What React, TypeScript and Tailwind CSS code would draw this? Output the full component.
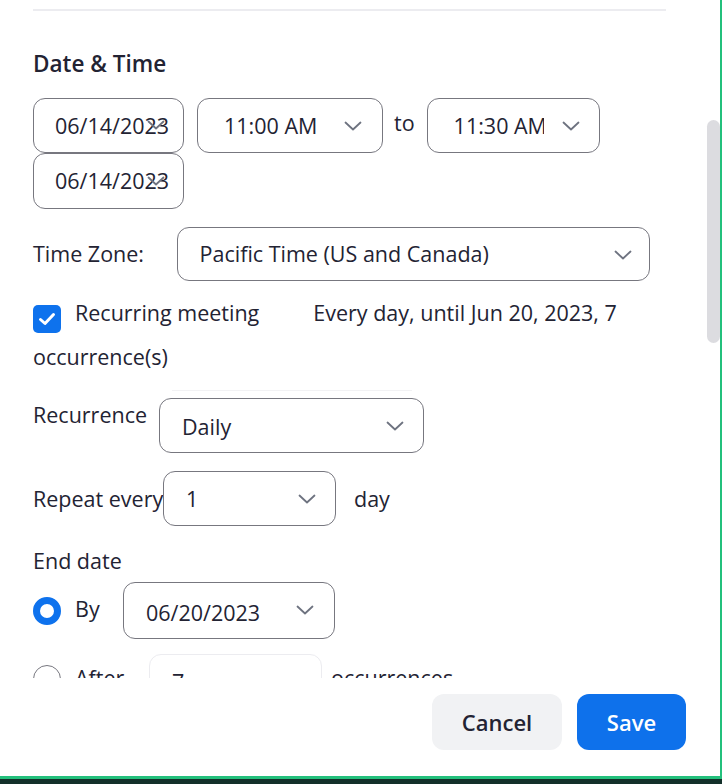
import { useState } from 'react'

function Chevron({ className = '' }: { className?: string }) {
  return (
    <svg width="18" height="10" viewBox="0 0 18 10" className={className} fill="none">
      <polyline points="1.5,1.5 9,8.5 16.5,1.5" stroke="#6e7380" strokeWidth="1.8" strokeLinecap="round" strokeLinejoin="round" />
    </svg>
  )
}

function SelectBox({
  value,
  className = '',
  textClass = '',
  chevronClass = '',
}: {
  value: string
  className?: string
  textClass?: string
  chevronClass?: string
}) {
  return (
    <div className={`relative flex items-center rounded-[12px] border border-[#77777f] bg-white overflow-hidden ${className}`}>
      <span className={`whitespace-nowrap ${textClass}`}>{value}</span>
      <Chevron className={`absolute ${chevronClass}`} />
    </div>
  )
}

export default function App() {
  const [recurring, setRecurring] = useState(true)

  return (
    <div
      className="relative h-[784px] w-[722px] overflow-hidden bg-white text-[#232333]"
      style={{ fontFamily: '"Open Sans", "Noto Sans", sans-serif' }}
    >
      <div className="h-[779px] w-[722px] border-r-2 border-b-[3px] border-[#23c07c] flex flex-col">
        {/* scroll area */}
        <div className="relative h-[678px] overflow-hidden">
          <div className="ml-[33px] mt-[9px] h-[2px] w-[633px] bg-[#ececf0]" />

          <div className="pl-[33px] pr-[70px]">
            <h2 className="mt-[39px] text-[22.5px] font-semibold leading-[28px]">Date &amp; Time</h2>

            <div className="mt-[20px] flex items-start text-[21.5px] leading-[28px]">
              <div className="flex flex-col">
                <SelectBox
                  value="06/14/2023"
                  className="h-[55px] w-[151px]"
                  textClass="pl-[21px]"
                  chevronClass="left-[113px] top-[21px]"
                />
                <SelectBox
                  value="06/14/2023"
                  className="h-[56px] w-[151px]"
                  textClass="pl-[21px]"
                  chevronClass="left-[113px] top-[22px]"
                />
              </div>
              <SelectBox
                value="11:00 AM"
                className="ml-[13px] h-[55px] w-[186px]"
                textClass="pl-[26px]"
                chevronClass="left-[146px] top-[22px]"
              />
              <span className="ml-[11px] mt-[11px]">to</span>
              <SelectBox
                value="11:30 AM"
                className="ml-[12px] h-[55px] w-[173px]"
                textClass="pl-[26px] w-[116px] shrink-0 overflow-hidden block"
                chevronClass="left-[134px] top-[22px]"
              />
            </div>

            <div className="mt-[18px] flex items-center text-[21.5px] leading-[28px]">
              <span className="w-[144px]">Time Zone:</span>
              <SelectBox
                value="Pacific Time (US and Canada)"
                className="h-[54px] w-[475px]"
                textClass="pl-[22px]"
                chevronClass="left-[436px] top-[22px]"
              />
            </div>

            <p className="mt-[10px] text-[21.5px] leading-[44px]">
              <button
                type="button"
                onClick={() => setRecurring(!recurring)}
                className="mr-[14px] inline-flex h-[28px] w-[28px] translate-y-[5px] items-center justify-center rounded-[5px] bg-[#0e72ed] align-baseline"
              >
                {recurring && (
                  <svg width="18" height="14" viewBox="0 0 18 14" fill="none">
                    <polyline points="2.5,7.5 7,11.5 15.5,2.5" stroke="white" strokeWidth="3" strokeLinecap="round" strokeLinejoin="round" />
                  </svg>
                )}
              </button>
              Recurring meeting
              <span className="ml-[54px]">Every day, until Jun 20, 2023, 7 occurrence(s)</span>
            </p>

            <div className="ml-[139px] mt-[11px] h-px w-[240px] bg-[#f2f2f4]" />

            <div className="mt-[7px] flex items-start text-[21.5px] leading-[28px]">
              <span className="mt-[3px] w-[126px]">Recurrence</span>
              <SelectBox
                value="Daily"
                className="h-[55px] w-[265px]"
                textClass="pl-[22px] pt-[2px]"
                chevronClass="left-[226px] top-[22px]"
              />
            </div>

            <div className="mt-[18px] flex items-center text-[21.5px] leading-[28px]">
              <span className="w-[130px] whitespace-nowrap">Repeat every</span>
              <SelectBox
                value="1"
                className="h-[55px] w-[173px]"
                textClass="pl-[22px]"
                chevronClass="left-[134px] top-[22px]"
              />
              <span className="ml-[18px]">day</span>
            </div>

            <div className="mt-[21px] text-[21.5px] leading-[28px]">End date</div>

            <div className="mt-[7px] flex items-center text-[21.5px] leading-[28px]">
              <span className="h-[28px] w-[28px] rounded-full border-[7px] border-[#0e72ed] bg-white" />
              <span className="ml-[14px] w-[48px] -translate-y-[2px]">By</span>
              <SelectBox
                value="06/20/2023"
                className="h-[57px] w-[212px]"
                textClass="pl-[22px] pt-[4px]"
                chevronClass="left-[172px] top-[22px]"
              />
            </div>

            <div className="mt-[15px] flex items-start text-[21.5px] leading-[28px]">
              <span className="mt-[11px] h-[28px] w-[28px] rounded-full border border-[#77777f] bg-white" />
              <span className="ml-[14px] mt-[10px] w-[74px]">After</span>
              <div className="flex h-[56px] w-[173px] items-center rounded-[12px] border border-[#ececf0] pl-[22px]">
                7
              </div>
              <span className="ml-[9px] mt-[10px]">occurrences</span>
            </div>
          </div>

          {/* scrollbar */}
          <div className="absolute right-[0px] top-[120px] h-[223px] w-[13px] rounded-full bg-[#dcdce0]" />
        </div>

        {/* footer */}
        <div className="flex flex-1 items-start justify-end gap-[15px] pr-[34px] pt-[16px]">
          <button
            type="button"
            className="h-[56px] w-[130px] rounded-[12px] bg-[#f1f2f4] text-[22px] font-semibold text-[#232333]"
          >
            Cancel
          </button>
          <button
            type="button"
            className="h-[56px] w-[109px] rounded-[12px] bg-[#0e71eb] text-[22px] font-semibold text-white"
          >
            Save
          </button>
        </div>
      </div>
      <div className="h-[5px] w-full bg-[#13302a]" />
    </div>
  )
}
